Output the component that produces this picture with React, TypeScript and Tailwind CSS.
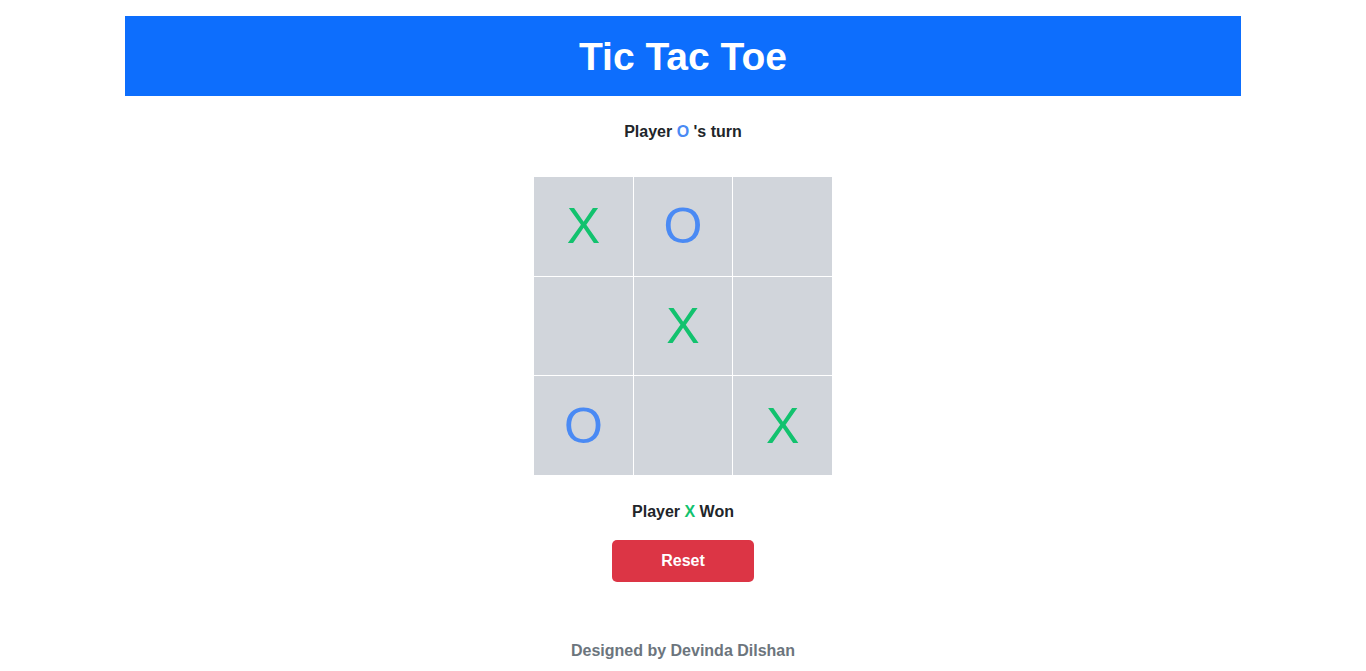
import React, { useState } from 'react';

type Cell = 'X' | 'O' | null;

const initialBoard: Cell[] = ['X', 'O', null, null, 'X', null, 'O', null, 'X'];

const PlayerMark: React.FC<{ value: Cell }> = ({ value }) => {
  if (value === 'X') return <span className="text-[#12c26e]">X</span>;
  if (value === 'O') return <span className="text-[#4a8af4]">O</span>;
  return null;
};

const App: React.FC = () => {
  const [board, setBoard] = useState<Cell[]>(initialBoard);

  return (
    <div className="min-h-screen bg-white font-['Liberation_Sans',Arial,sans-serif] text-[#212529]">
      <div className="mx-auto w-[1116px] pt-4">
        <header className="flex h-20 items-center justify-center bg-[#0d6efd]">
          <h1 className="text-[39px] font-bold leading-none text-white">Tic Tac Toe</h1>
        </header>

        <p className="mt-6 text-center text-base leading-6 font-semibold">
          Player <PlayerMark value="O" /> 's turn
        </p>

        <div className="mx-auto mt-[33px] grid w-[298px] grid-cols-3 gap-px bg-white">
          {board.map((c, i) => (
            <button
              key={i}
              onClick={() => {
                if (c) return;
                const next = [...board];
                next[i] = 'O';
                setBoard(next);
              }}
              className="flex h-[98.67px] items-center justify-center bg-[#d1d5db] text-[50px] leading-none"
            >
              <PlayerMark value={c} />
            </button>
          ))}
        </div>

        <p className="mt-[25px] text-center text-base leading-6 font-semibold">
          Player <PlayerMark value="X" /> Won
        </p>

        <div className="mt-4 flex justify-center">
          <button
            onClick={() => setBoard(Array(9).fill(null))}
            className="h-[42px] w-[142px] rounded-[5px] bg-[#dc3545] text-base font-semibold text-white"
          >
            Reset
          </button>
        </div>

        <footer className="mt-[57px] text-center text-base leading-6 font-bold text-[#6c757d]">
          Designed by Devinda Dilshan
        </footer>
      </div>
    </div>
  );
};

export default App;
